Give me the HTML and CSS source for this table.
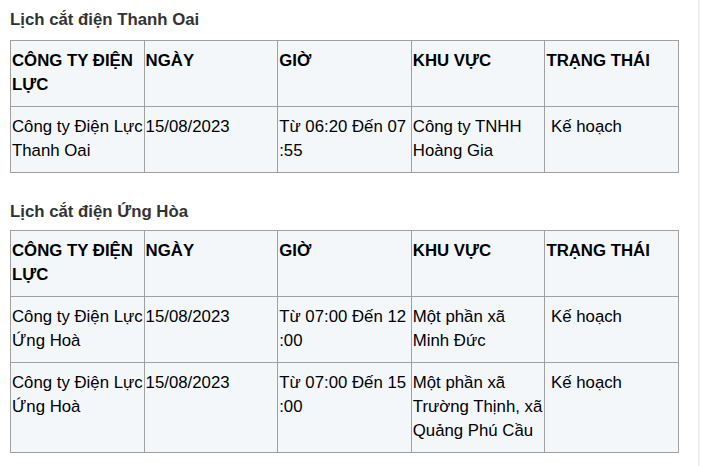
FILE: index.html
```html
<!DOCTYPE html>
<html lang="vi">
<head>
<meta charset="utf-8">
<title>Lịch cắt điện</title>
<link rel="stylesheet" href="styles.css">
</head>
<body>
<div class="page">
  <h3 class="title">Lịch cắt điện Thanh Oai</h3>
  <table class="sched">
    <thead>
      <tr><th>CÔNG TY ĐIỆN LỰC</th><th>NGÀY</th><th>GIỜ</th><th>KHU VỰC</th><th>TRẠNG THÁI</th></tr>
    </thead>
    <tbody>
      <tr><td>Công ty Điện Lực Thanh Oai</td><td>15/08/2023</td><td>Từ 06:20 Đến 07 :55</td><td>Công ty TNHH Hoàng Gia</td><td>&nbsp;Kế hoạch</td></tr>
    </tbody>
  </table>

  <h3 class="title second">Lịch cắt điện Ứng Hòa</h3>
  <table class="sched">
    <thead>
      <tr><th>CÔNG TY ĐIỆN LỰC</th><th>NGÀY</th><th>GIỜ</th><th>KHU VỰC</th><th>TRẠNG THÁI</th></tr>
    </thead>
    <tbody>
      <tr><td>Công ty Điện Lực Ứng Hoà</td><td>15/08/2023</td><td>Từ 07:00 Đến 12 :00</td><td>Một phần xã Minh Đức</td><td>&nbsp;Kế hoạch</td></tr>
      <tr><td>Công ty Điện Lực Ứng Hoà</td><td>15/08/2023</td><td>Từ 07:00 Đến 15 :00</td><td>Một phần xã Trường Thịnh, xã Quảng Phú Cầu</td><td>&nbsp;Kế hoạch</td></tr>
    </tbody>
  </table>
</div>
</body>
</html>
```

FILE: styles.css
```css
html, body {
  margin: 0;
  padding: 0;
  background: #fff;
}

.page {
  width: 700px;
  min-height: 466px;
  box-sizing: border-box;
  padding: 8px 0 0 10px;
  border-right: 2px solid #efefef;
  font-family: "Liberation Sans", Arial, sans-serif;
  font-size: 16.8px;
  line-height: 24px;
  color: #000;
}

.title {
  margin: 0 0 8px;
  font-size: 16.8px;
  line-height: 24px;
  font-weight: bold;
  color: #333;
}

.second {
  margin-top: 27px;
  margin-bottom: 6px;
}

.sched {
  width: 669px;
  border-collapse: collapse;
  table-layout: fixed;
  background: #f3f7fa;
}

.sched th,
.sched td {
  border: 1px solid #a0a0a0;
  padding: 8px 0 9px 1px;
  vertical-align: top;
  text-align: left;
  font-size: 16.8px;
  line-height: 24px;
}

.sched th {
  font-weight: bold;
}
```
